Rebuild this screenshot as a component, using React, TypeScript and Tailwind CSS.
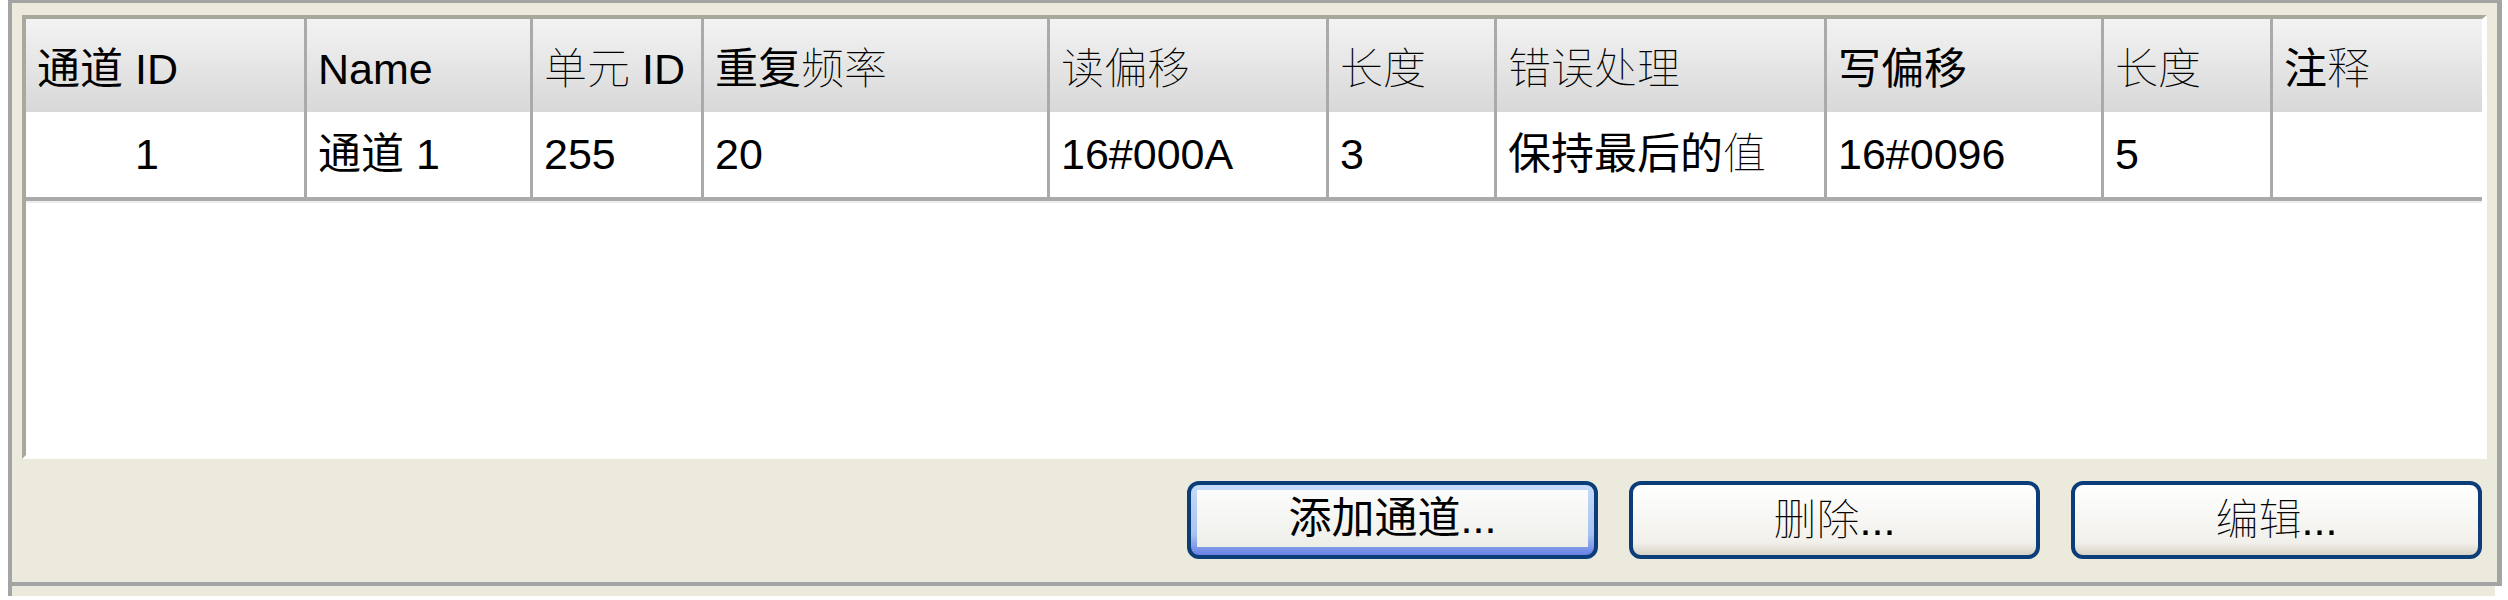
import React from 'react'

type Seg = { t: string; thin?: boolean }

// column widths include the 3px divider on the right edge
const cols = [
  { w: 'w-[281px]', head: [{ t: '通道' }, { t: ' ID' }], cell: [{ t: '1' }], center: true },
  { w: 'w-[226px]', head: [{ t: 'Name' }], cell: [{ t: '通道' }, { t: ' 1' }] },
  { w: 'w-[171px]', head: [{ t: '单元', thin: true }, { t: ' ID' }], cell: [{ t: '255' }] },
  { w: 'w-[346px]', head: [{ t: '重复' }, { t: '频率', thin: true }], cell: [{ t: '20' }] },
  { w: 'w-[279px]', head: [{ t: '读偏移', thin: true }], cell: [{ t: '16#000A' }] },
  { w: 'w-[168px]', head: [{ t: '长度', thin: true }], cell: [{ t: '3' }] },
  { w: 'w-[330px]', head: [{ t: '错误处理', thin: true }], cell: [{ t: '保持最后的' }, { t: '值', thin: true }] },
  { w: 'w-[277px]', head: [{ t: '写偏移' }], cell: [{ t: '16#0096' }] },
  { w: 'w-[169px]', head: [{ t: '长度', thin: true }], cell: [{ t: '5' }] },
  { w: 'flex-1', head: [{ t: '注' }, { t: '释', thin: true }], cell: [] as Seg[] },
]

const Text = ({ segs }: { segs: Seg[] }) => (
  <span className="whitespace-pre">
    {segs.map((s, i) => (
      <span key={i} className={s.thin ? 'font-thin' : 'font-normal'}>
        {s.t}
      </span>
    ))}
  </span>
)

const XpButton = ({ label, thin, isDefault }: { label: string; thin?: boolean; isDefault?: boolean }) => {
  const text = (
    <span className={thin ? 'font-thin' : 'font-normal'}>
      {label}
      <span className="font-normal">...</span>
    </span>
  )
  if (isDefault) {
    return (
      <div className="w-[411px] h-[78px] rounded-[12px] border-[4px] border-[#0b3d79] bg-linear-to-b from-[#c6dbf9] via-[#a9c3f0] via-70% to-[#6a80e3] px-[6px] pt-[5px] pb-[8px]">
        <div className="h-full bg-linear-to-b from-[#fcfcfc] to-[#eeeee9] flex items-center justify-center">
          {text}
        </div>
      </div>
    )
  }
  return (
    <div className="w-[411px] h-[78px] rounded-[12px] border-[4px] border-[#0b3d79] bg-linear-to-b from-[#ffffff] via-[#f1f0eb] via-82% to-[#d8d3c7] flex items-center justify-center">
      {text}
    </div>
  )
}

export default function App() {
  return (
    <div className="w-[2508px] h-[600px] bg-white text-black text-[43px] leading-none font-['Liberation_Sans','Noto_Sans_CJK_SC',sans-serif]">
      <div className="ml-[8px] w-[2494px] h-[586px] border-t-[3px] border-l-[4px] border-r-[5px] border-b-[4px] border-[#a4a4a4] bg-[#ece9dd] pt-[12px] px-[10px]">
        {/* sunken list view */}
        <div className="h-[444px] border-t-[4px] border-l-[4px] border-r-[5px] border-b-[4px] border-t-[#a9a89c] border-l-[#a9a89c] border-r-white border-b-white bg-white flex flex-col">
          <div className="h-[93px] flex bg-linear-to-b from-[#f3f3f3] to-[#d8d8d8]">
            {cols.map((c, i) => (
              <div
                key={i}
                className={`${c.w} h-full flex items-center pl-[11px] pt-[8px] ${
                  i < cols.length - 1 ? 'border-r-[3px] border-[#aaaaaa]' : ''
                }`}
              >
                <Text segs={c.head} />
              </div>
            ))}
          </div>
          <div className="h-[89px] flex border-b-[4px] border-[#aaaaaa] shadow-[0_2px_0_#eeeeee]">
            {cols.map((c, i) => (
              <div
                key={i}
                className={`${c.w} h-full flex items-center ${
                  c.center ? 'justify-center pr-[36px]' : 'pl-[11px]'
                } ${i < cols.length - 1 ? 'border-r-[3px] border-[#aaaaaa]' : ''}`}
              >
                <Text segs={c.cell} />
              </div>
            ))}
          </div>
        </div>
        <div className="mt-[22px] pr-[5px] flex justify-end gap-[31px]">
          <XpButton label="添加通道" isDefault />
          <XpButton label="删除" thin />
          <XpButton label="编辑" thin />
        </div>
      </div>
      <div className="ml-[8px] w-[2487px] h-[10px] border-l-[4px] border-[#a4a4a4] bg-[#ece9dd]" />
    </div>
  )
}
